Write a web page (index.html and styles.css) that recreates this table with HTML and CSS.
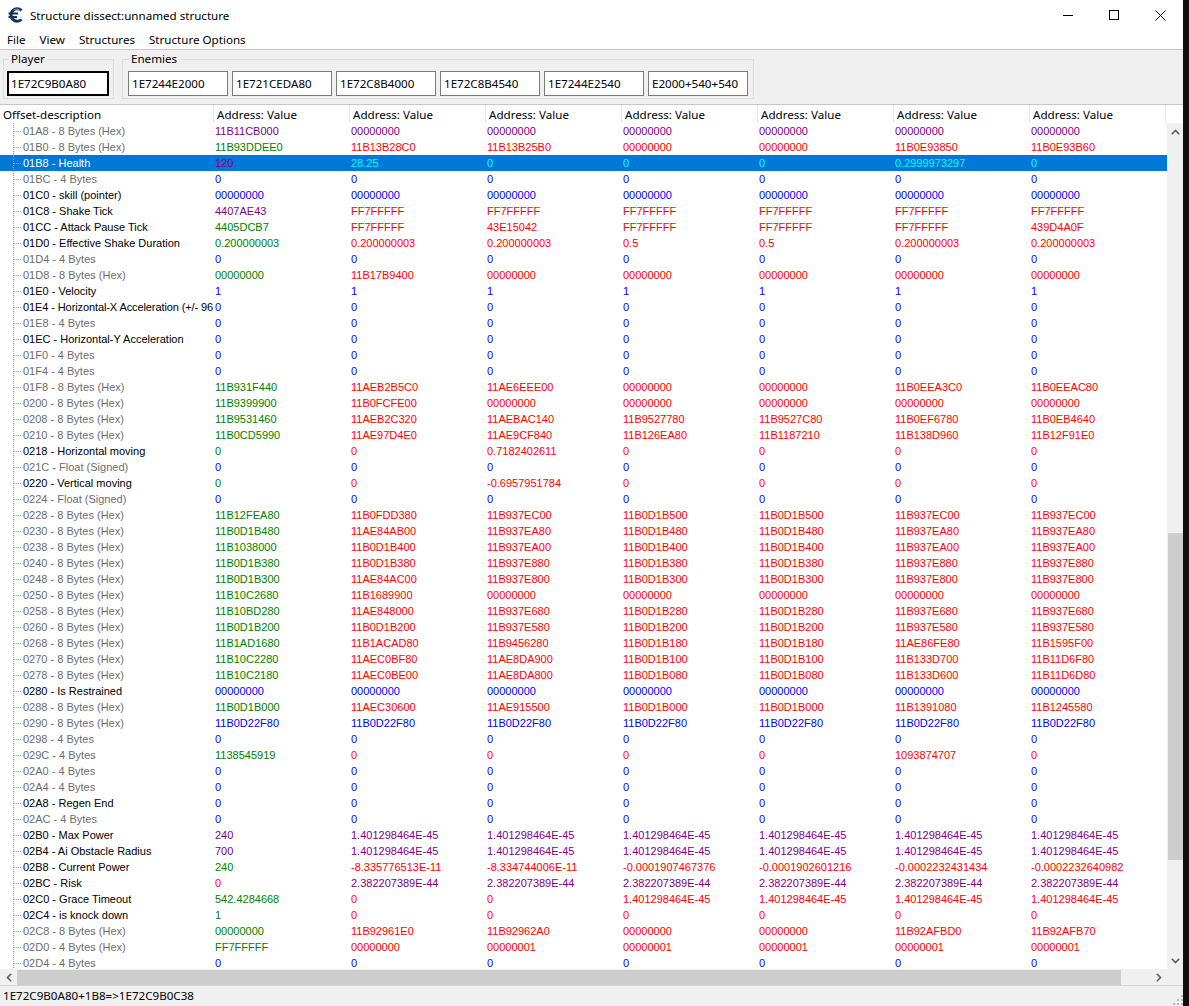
FILE: index.html
```html
<!DOCTYPE html>
<html>
<head>
<meta charset="utf-8">
<title>Structure dissect:unnamed structure</title>
<link rel="stylesheet" href="styles.css">
</head>
<body>
<div class="window">
  <div class="titlebar">
    <svg class="app-icon" viewBox="0 0 16 16" width="16" height="16">
      <path d="M13.5 3.5 A6.2 6.2 0 1 0 13.5 12.5" fill="none" stroke="#17325e" stroke-width="3"/>
      <path d="M0.5 6.5 H10" stroke="#17325e" stroke-width="2"/>
      <path d="M0.5 10 H9" stroke="#17325e" stroke-width="2"/>
      <path d="M12.6 4.3 A5 5 0 0 0 6 3" fill="none" stroke="#7aa6dc" stroke-width="1"/>
    </svg>
    <div class="title">Structure dissect:unnamed structure</div>
    <div class="wc"><svg width="10" height="10" viewBox="0 0 10 10"><path d="M0 5.5 H10" stroke="#000" stroke-width="1"/></svg></div>
    <div class="wc"><svg width="10" height="10" viewBox="0 0 10 10"><rect x="0.5" y="0.5" width="9" height="9" fill="none" stroke="#000" stroke-width="1"/></svg></div>
    <div class="wc"><svg width="11" height="11" viewBox="0 0 11 11"><path d="M0.5 0.5 L10.5 10.5 M10.5 0.5 L0.5 10.5" stroke="#000" stroke-width="1"/></svg></div>
  </div>
  <div class="menubar">
    <span class="menu-item">File</span>
    <span class="menu-item">View</span>
    <span class="menu-item">Structures</span>
    <span class="menu-item">Structure Options</span>
  </div>
  <div class="panel">
    <fieldset class="group group-player">
      <legend>Player</legend>
      <div class="edit edit-focus">1E72C9B0A80</div>
    </fieldset>
    <fieldset class="group group-enemies">
      <legend>Enemies</legend>
      <div class="edits">
        <div class="edit">1E7244E2000</div>
        <div class="edit">1E721CEDA80</div>
        <div class="edit">1E72C8B4000</div>
        <div class="edit">1E72C8B4540</div>
        <div class="edit">1E7244E2540</div>
        <div class="edit">E2000+540+540</div>
      </div>
    </fieldset>
  </div>
  <div class="header">
    <div class="hcell">Offset-description</div>
    <div class="hcell">Address: Value</div>
    <div class="hcell">Address: Value</div>
    <div class="hcell">Address: Value</div>
    <div class="hcell">Address: Value</div>
    <div class="hcell">Address: Value</div>
    <div class="hcell">Address: Value</div>
    <div class="hcell">Address: Value</div>
    <div class="hfill"></div>
  </div>
  <div class="tree">
    <div class="rows">
      <div class="row all-p"><span class="d dg">01A8 - 8 Bytes (Hex)</span><span class="v">11B11CB000</span><span class="v">00000000</span><span class="v">00000000</span><span class="v">00000000</span><span class="v">00000000</span><span class="v">00000000</span><span class="v">00000000</span></div>
      <div class="row gr"><span class="d dg">01B0 - 8 Bytes (Hex)</span><span class="v">11B93DDEE0</span><span class="v">11B13B28C0</span><span class="v">11B13B25B0</span><span class="v">00000000</span><span class="v">00000000</span><span class="v">11B0E93850</span><span class="v">11B0E93B60</span></div>
      <div class="row sel"><span class="d">01B8 - Health</span><span class="v">120</span><span class="v">28.25</span><span class="v">0</span><span class="v">0</span><span class="v">0</span><span class="v">0.2999973297</span><span class="v">0</span></div>
      <div class="row all-b"><span class="d dg">01BC - 4 Bytes</span><span class="v">0</span><span class="v">0</span><span class="v">0</span><span class="v">0</span><span class="v">0</span><span class="v">0</span><span class="v">0</span></div>
      <div class="row all-b"><span class="d">01C0 - skill (pointer)</span><span class="v">00000000</span><span class="v">00000000</span><span class="v">00000000</span><span class="v">00000000</span><span class="v">00000000</span><span class="v">00000000</span><span class="v">00000000</span></div>
      <div class="row pr"><span class="d">01C8 - Shake Tick</span><span class="v">4407AE43</span><span class="v">FF7FFFFF</span><span class="v">FF7FFFFF</span><span class="v">FF7FFFFF</span><span class="v">FF7FFFFF</span><span class="v">FF7FFFFF</span><span class="v">FF7FFFFF</span></div>
      <div class="row gr"><span class="d">01CC - Attack Pause Tick</span><span class="v">4405DCB7</span><span class="v">FF7FFFFF</span><span class="v">43E15042</span><span class="v">FF7FFFFF</span><span class="v">FF7FFFFF</span><span class="v">FF7FFFFF</span><span class="v">439D4A0F</span></div>
      <div class="row gr"><span class="d">01D0 - Effective Shake Duration</span><span class="v">0.200000003</span><span class="v">0.200000003</span><span class="v">0.200000003</span><span class="v">0.5</span><span class="v">0.5</span><span class="v">0.200000003</span><span class="v">0.200000003</span></div>
      <div class="row all-b"><span class="d dg">01D4 - 4 Bytes</span><span class="v">0</span><span class="v">0</span><span class="v">0</span><span class="v">0</span><span class="v">0</span><span class="v">0</span><span class="v">0</span></div>
      <div class="row gr"><span class="d dg">01D8 - 8 Bytes (Hex)</span><span class="v">00000000</span><span class="v">11B17B9400</span><span class="v">00000000</span><span class="v">00000000</span><span class="v">00000000</span><span class="v">00000000</span><span class="v">00000000</span></div>
      <div class="row all-b"><span class="d">01E0 - Velocity</span><span class="v">1</span><span class="v">1</span><span class="v">1</span><span class="v">1</span><span class="v">1</span><span class="v">1</span><span class="v">1</span></div>
      <div class="row all-b"><span class="d d-tight">01E4 - Horizontal-X Acceleration (+/- 96</span><span class="v">0</span><span class="v">0</span><span class="v">0</span><span class="v">0</span><span class="v">0</span><span class="v">0</span><span class="v">0</span></div>
      <div class="row all-b"><span class="d dg">01E8 - 4 Bytes</span><span class="v">0</span><span class="v">0</span><span class="v">0</span><span class="v">0</span><span class="v">0</span><span class="v">0</span><span class="v">0</span></div>
      <div class="row all-b"><span class="d">01EC - Horizontal-Y Acceleration</span><span class="v">0</span><span class="v">0</span><span class="v">0</span><span class="v">0</span><span class="v">0</span><span class="v">0</span><span class="v">0</span></div>
      <div class="row all-b"><span class="d dg">01F0 - 4 Bytes</span><span class="v">0</span><span class="v">0</span><span class="v">0</span><span class="v">0</span><span class="v">0</span><span class="v">0</span><span class="v">0</span></div>
      <div class="row all-b"><span class="d dg">01F4 - 4 Bytes</span><span class="v">0</span><span class="v">0</span><span class="v">0</span><span class="v">0</span><span class="v">0</span><span class="v">0</span><span class="v">0</span></div>
      <div class="row gr"><span class="d dg">01F8 - 8 Bytes (Hex)</span><span class="v">11B931F440</span><span class="v">11AEB2B5C0</span><span class="v">11AE6EEE00</span><span class="v">00000000</span><span class="v">00000000</span><span class="v">11B0EEA3C0</span><span class="v">11B0EEAC80</span></div>
      <div class="row gr"><span class="d dg">0200 - 8 Bytes (Hex)</span><span class="v">11B9399900</span><span class="v">11B0FCFE00</span><span class="v">00000000</span><span class="v">00000000</span><span class="v">00000000</span><span class="v">00000000</span><span class="v">00000000</span></div>
      <div class="row gr"><span class="d dg">0208 - 8 Bytes (Hex)</span><span class="v">11B9531460</span><span class="v">11AEB2C320</span><span class="v">11AEBAC140</span><span class="v">11B9527780</span><span class="v">11B9527C80</span><span class="v">11B0EF6780</span><span class="v">11B0EB4640</span></div>
      <div class="row gr"><span class="d dg">0210 - 8 Bytes (Hex)</span><span class="v">11B0CD5990</span><span class="v">11AE97D4E0</span><span class="v">11AE9CF840</span><span class="v">11B126EA80</span><span class="v">11B1187210</span><span class="v">11B138D960</span><span class="v">11B12F91E0</span></div>
      <div class="row gr"><span class="d">0218 - Horizontal moving</span><span class="v">0</span><span class="v">0</span><span class="v">0.7182402611</span><span class="v">0</span><span class="v">0</span><span class="v">0</span><span class="v">0</span></div>
      <div class="row all-b"><span class="d dg">021C - Float (Signed)</span><span class="v">0</span><span class="v">0</span><span class="v">0</span><span class="v">0</span><span class="v">0</span><span class="v">0</span><span class="v">0</span></div>
      <div class="row gr"><span class="d">0220 - Vertical moving</span><span class="v">0</span><span class="v">0</span><span class="v">-0.6957951784</span><span class="v">0</span><span class="v">0</span><span class="v">0</span><span class="v">0</span></div>
      <div class="row all-b"><span class="d dg">0224 - Float (Signed)</span><span class="v">0</span><span class="v">0</span><span class="v">0</span><span class="v">0</span><span class="v">0</span><span class="v">0</span><span class="v">0</span></div>
      <div class="row gr"><span class="d dg">0228 - 8 Bytes (Hex)</span><span class="v">11B12FEA80</span><span class="v">11B0FDD380</span><span class="v">11B937EC00</span><span class="v">11B0D1B500</span><span class="v">11B0D1B500</span><span class="v">11B937EC00</span><span class="v">11B937EC00</span></div>
      <div class="row gr"><span class="d dg">0230 - 8 Bytes (Hex)</span><span class="v">11B0D1B480</span><span class="v">11AE84AB00</span><span class="v">11B937EA80</span><span class="v">11B0D1B480</span><span class="v">11B0D1B480</span><span class="v">11B937EA80</span><span class="v">11B937EA80</span></div>
      <div class="row gr"><span class="d dg">0238 - 8 Bytes (Hex)</span><span class="v">11B1038000</span><span class="v">11B0D1B400</span><span class="v">11B937EA00</span><span class="v">11B0D1B400</span><span class="v">11B0D1B400</span><span class="v">11B937EA00</span><span class="v">11B937EA00</span></div>
      <div class="row gr"><span class="d dg">0240 - 8 Bytes (Hex)</span><span class="v">11B0D1B380</span><span class="v">11B0D1B380</span><span class="v">11B937E880</span><span class="v">11B0D1B380</span><span class="v">11B0D1B380</span><span class="v">11B937E880</span><span class="v">11B937E880</span></div>
      <div class="row gr"><span class="d dg">0248 - 8 Bytes (Hex)</span><span class="v">11B0D1B300</span><span class="v">11AE84AC00</span><span class="v">11B937E800</span><span class="v">11B0D1B300</span><span class="v">11B0D1B300</span><span class="v">11B937E800</span><span class="v">11B937E800</span></div>
      <div class="row gr"><span class="d dg">0250 - 8 Bytes (Hex)</span><span class="v">11B10C2680</span><span class="v">11B1689900</span><span class="v">00000000</span><span class="v">00000000</span><span class="v">00000000</span><span class="v">00000000</span><span class="v">00000000</span></div>
      <div class="row gr"><span class="d dg">0258 - 8 Bytes (Hex)</span><span class="v">11B10BD280</span><span class="v">11AE848000</span><span class="v">11B937E680</span><span class="v">11B0D1B280</span><span class="v">11B0D1B280</span><span class="v">11B937E680</span><span class="v">11B937E680</span></div>
      <div class="row gr"><span class="d dg">0260 - 8 Bytes (Hex)</span><span class="v">11B0D1B200</span><span class="v">11B0D1B200</span><span class="v">11B937E580</span><span class="v">11B0D1B200</span><span class="v">11B0D1B200</span><span class="v">11B937E580</span><span class="v">11B937E580</span></div>
      <div class="row gr"><span class="d dg">0268 - 8 Bytes (Hex)</span><span class="v">11B1AD1680</span><span class="v">11B1ACAD80</span><span class="v">11B9456280</span><span class="v">11B0D1B180</span><span class="v">11B0D1B180</span><span class="v">11AE86FE80</span><span class="v">11B1595F00</span></div>
      <div class="row gr"><span class="d dg">0270 - 8 Bytes (Hex)</span><span class="v">11B10C2280</span><span class="v">11AEC0BF80</span><span class="v">11AE8DA900</span><span class="v">11B0D1B100</span><span class="v">11B0D1B100</span><span class="v">11B133D700</span><span class="v">11B11D6F80</span></div>
      <div class="row gr"><span class="d dg">0278 - 8 Bytes (Hex)</span><span class="v">11B10C2180</span><span class="v">11AEC0BE00</span><span class="v">11AE8DA800</span><span class="v">11B0D1B080</span><span class="v">11B0D1B080</span><span class="v">11B133D600</span><span class="v">11B11D6D80</span></div>
      <div class="row all-b"><span class="d">0280 - Is Restrained</span><span class="v">00000000</span><span class="v">00000000</span><span class="v">00000000</span><span class="v">00000000</span><span class="v">00000000</span><span class="v">00000000</span><span class="v">00000000</span></div>
      <div class="row gr"><span class="d dg">0288 - 8 Bytes (Hex)</span><span class="v">11B0D1B000</span><span class="v">11AEC30600</span><span class="v">11AE915500</span><span class="v">11B0D1B000</span><span class="v">11B0D1B000</span><span class="v">11B1391080</span><span class="v">11B1245580</span></div>
      <div class="row all-b"><span class="d dg">0290 - 8 Bytes (Hex)</span><span class="v">11B0D22F80</span><span class="v">11B0D22F80</span><span class="v">11B0D22F80</span><span class="v">11B0D22F80</span><span class="v">11B0D22F80</span><span class="v">11B0D22F80</span><span class="v">11B0D22F80</span></div>
      <div class="row all-b"><span class="d dg">0298 - 4 Bytes</span><span class="v">0</span><span class="v">0</span><span class="v">0</span><span class="v">0</span><span class="v">0</span><span class="v">0</span><span class="v">0</span></div>
      <div class="row gr"><span class="d dg">029C - 4 Bytes</span><span class="v">1138545919</span><span class="v">0</span><span class="v">0</span><span class="v">0</span><span class="v">0</span><span class="v">1093874707</span><span class="v">0</span></div>
      <div class="row all-b"><span class="d dg">02A0 - 4 Bytes</span><span class="v">0</span><span class="v">0</span><span class="v">0</span><span class="v">0</span><span class="v">0</span><span class="v">0</span><span class="v">0</span></div>
      <div class="row all-b"><span class="d dg">02A4 - 4 Bytes</span><span class="v">0</span><span class="v">0</span><span class="v">0</span><span class="v">0</span><span class="v">0</span><span class="v">0</span><span class="v">0</span></div>
      <div class="row all-b"><span class="d">02A8 - Regen End</span><span class="v">0</span><span class="v">0</span><span class="v">0</span><span class="v">0</span><span class="v">0</span><span class="v">0</span><span class="v">0</span></div>
      <div class="row all-b"><span class="d dg">02AC - 4 Bytes</span><span class="v">0</span><span class="v">0</span><span class="v">0</span><span class="v">0</span><span class="v">0</span><span class="v">0</span><span class="v">0</span></div>
      <div class="row all-p"><span class="d">02B0 - Max Power</span><span class="v">240</span><span class="v">1.401298464E-45</span><span class="v">1.401298464E-45</span><span class="v">1.401298464E-45</span><span class="v">1.401298464E-45</span><span class="v">1.401298464E-45</span><span class="v">1.401298464E-45</span></div>
      <div class="row all-p"><span class="d">02B4 - Ai Obstacle Radius</span><span class="v">700</span><span class="v">1.401298464E-45</span><span class="v">1.401298464E-45</span><span class="v">1.401298464E-45</span><span class="v">1.401298464E-45</span><span class="v">1.401298464E-45</span><span class="v">1.401298464E-45</span></div>
      <div class="row gr"><span class="d">02B8 - Current Power</span><span class="v">240</span><span class="v">-8.335776513E-11</span><span class="v">-8.334744006E-11</span><span class="v">-0.0001907467376</span><span class="v">-0.0001902601216</span><span class="v">-0.0002232431434</span><span class="v">-0.0002232640982</span></div>
      <div class="row rp"><span class="d">02BC - Risk</span><span class="v">0</span><span class="v">2.382207389E-44</span><span class="v">2.382207389E-44</span><span class="v">2.382207389E-44</span><span class="v">2.382207389E-44</span><span class="v">2.382207389E-44</span><span class="v">2.382207389E-44</span></div>
      <div class="row gr"><span class="d">02C0 - Grace Timeout</span><span class="v">542.4284668</span><span class="v">0</span><span class="v">0</span><span class="v">1.401298464E-45</span><span class="v">1.401298464E-45</span><span class="v">1.401298464E-45</span><span class="v">1.401298464E-45</span></div>
      <div class="row gr"><span class="d">02C4 - is knock down</span><span class="v">1</span><span class="v">0</span><span class="v">0</span><span class="v">0</span><span class="v">0</span><span class="v">0</span><span class="v">0</span></div>
      <div class="row gr"><span class="d dg">02C8 - 8 Bytes (Hex)</span><span class="v">00000000</span><span class="v">11B92961E0</span><span class="v">11B92962A0</span><span class="v">00000000</span><span class="v">00000000</span><span class="v">11B92AFBD0</span><span class="v">11B92AFB70</span></div>
      <div class="row gr"><span class="d dg">02D0 - 4 Bytes (Hex)</span><span class="v">FF7FFFFF</span><span class="v">00000000</span><span class="v">00000001</span><span class="v">00000001</span><span class="v">00000001</span><span class="v">00000001</span><span class="v">00000001</span></div>
      <div class="row all-b"><span class="d dg">02D4 - 4 Bytes</span><span class="v">0</span><span class="v">0</span><span class="v">0</span><span class="v">0</span><span class="v">0</span><span class="v">0</span><span class="v">0</span></div>
    </div>
    <div class="vscroll">
      <div class="sb-btn"><svg width="9" height="6" viewBox="0 0 9 6"><path d="M0.8 5.2 L4.5 1.5 L8.2 5.2" fill="none" stroke="#606060" stroke-width="1.6"/></svg></div>
      <div class="vtrack"><div class="vthumb"></div></div>
      <div class="sb-btn"><svg width="9" height="6" viewBox="0 0 9 6"><path d="M0.8 0.8 L4.5 4.5 L8.2 0.8" fill="none" stroke="#606060" stroke-width="1.6"/></svg></div>
    </div>
  </div>
  <div class="hscroll">
    <div class="sb-btn hbtn"><svg width="6" height="9" viewBox="0 0 6 9"><path d="M5.2 0.8 L1.5 4.5 L5.2 8.2" fill="none" stroke="#606060" stroke-width="1.6"/></svg></div>
    <div class="hthumb"></div>
    <div class="htrack"></div>
    <div class="sb-btn hbtn"><svg width="6" height="9" viewBox="0 0 6 9"><path d="M0.8 0.8 L4.5 4.5 L0.8 8.2" fill="none" stroke="#606060" stroke-width="1.6"/></svg></div>
    <div class="corner"></div>
  </div>
  <div class="statusbar">
    <span class="status-text">1E72C9B0A80+1B8=&gt;1E72C9B0C38</span>
    <svg class="grip" width="10" height="10" viewBox="0 0 10 10">
      <rect x="8" y="0" width="2" height="2" fill="#b8b8b8"/>
      <rect x="4" y="4" width="2" height="2" fill="#b8b8b8"/>
      <rect x="8" y="4" width="2" height="2" fill="#b8b8b8"/>
      <rect x="0" y="8" width="2" height="2" fill="#b8b8b8"/>
      <rect x="4" y="8" width="2" height="2" fill="#b8b8b8"/>
      <rect x="8" y="8" width="2" height="2" fill="#b8b8b8"/>
    </svg>
  </div>
</div>
<div class="strip"></div>
</body>
</html>
```
FILE: styles.css
```css
* { box-sizing: border-box; }
html, body { margin: 0; padding: 0; }
body {
  width: 1189px;
  height: 1006px;
  overflow: hidden;
  display: flex;
  background: #0c0c0c;
  font-family: "Noto Sans", "Liberation Sans", sans-serif;
  color: #000;
}
.window {
  width: 1183px;
  height: 1006px;
  display: flex;
  flex-direction: column;
  background: #f0f0f0;
  flex: none;
}
.strip { flex: 1; background: #101010; }

/* title bar */
.titlebar {
  height: 30px;
  background: #fff;
  display: flex;
  align-items: center;
  flex: none;
}
.app-icon { margin-left: 8px; margin-right: 6px; margin-top: -1px; }
.title { flex: 1; font-size: 11.6px; }
.wc {
  width: 46px;
  height: 30px;
  display: flex;
  align-items: center;
  justify-content: center;
}

/* menu */
.menubar {
  height: 19px;
  background: #fff;
  display: flex;
  align-items: center;
  font-size: 11.6px;
  flex: none;
  padding-bottom: 1px;
}
.menu-item { padding: 0 7px; }

/* top panel */
.panel {
  height: 56px;
  flex: none;
  border-top: 1px solid #c6c6c6;
  border-bottom: 1px solid #c6c6c6;
  background: #f0f0f0;
  display: flex;
  align-items: flex-start;
  padding: 1px 0 0 3px;
  gap: 8px;
}
.group {
  margin: 0;
  border: 1px solid #dcdcdc;
  padding: 4px 3px 2px 3px;
  font-size: 11.6px;
}
.group legend {
  margin-left: 2px;
  padding: 0 2px;
  line-height: 16px;
}
.group-player { width: 111px; }
.group-enemies { width: 632px; padding-left: 5px; }
.group-enemies legend { margin-left: 1px; }
.edits { display: flex; gap: 4px; }
.edit {
  width: 100px;
  height: 25px;
  background: #fff;
  border: 1px solid #7a7a7a;
  font-size: 11.6px;
  line-height: 23px;
  padding-left: 3px;
  white-space: nowrap;
  overflow: hidden;
}
.edit-focus {
  width: 102px;
  border: 2px solid #000;
  line-height: 21px;
  padding-left: 2px;
}

/* header */
.header {
  height: 18px;
  flex: none;
  background: #fff;
  display: grid;
  grid-template-columns: 214px repeat(7, 136px) 1fr;
  font-size: 11.6px;
  line-height: 18px;
}
.hcell {
  padding-left: 3px;
  padding-top: 1px;
  border-right: 1px solid #e5e5e5;
  white-space: nowrap;
  overflow: hidden;
}

/* tree */
.tree {
  height: 846px;
  flex: none;
  display: flex;
  background: #fff;
}
.rows {
  width: 1167px;
  overflow: hidden;
  font-family: "Liberation Sans", Arial, sans-serif;
  font-size: 11px;
}
.row {
  display: grid;
  grid-template-columns: 214px repeat(7, 136px) 1fr;
  height: 16px;
  line-height: 15px;
  padding-top: 1px;
  white-space: nowrap;
}
.d {
  padding-left: 23px;
  overflow: hidden;
  color: #000;
  margin-top: -1px;
  padding-top: 1px;
  background-image:
    repeating-linear-gradient(to bottom, #a0a0a0 0 1px, transparent 1px 2px),
    repeating-linear-gradient(to right, #a0a0a0 0 1px, transparent 1px 2px);
  background-size: 1px 16px, 8px 1px;
  background-position: 13px 0, 14px 8px;
  background-repeat: no-repeat;
}
.d-tight { letter-spacing: -0.1px; }
.dg { color: #6d6d6d; }
.v { padding-left: 1px; overflow: hidden; }

.all-p .v { color: #800080; }
.all-b .v { color: #0000ff; }
.gr .v { color: #ff0000; }
.gr .v:nth-child(2) { color: #008000; }
.pr .v { color: #ff0000; }
.pr .v:nth-child(2) { color: #800080; }
.rp .v { color: #800080; }
.rp .v:nth-child(2) { color: #ff0000; }
.sel { background: #0078d7; }
.sel .d { color: #fff; }
.sel .v { color: #00ffff; }
.sel .v:nth-child(2) { color: #800080; }

/* scrollbars */
.vscroll {
  width: 16px;
  display: flex;
  flex-direction: column;
  background: #f0f0f0;
}
.sb-btn {
  height: 17px;
  display: flex;
  align-items: center;
  justify-content: center;
  flex: none;
}
.vtrack { flex: 1; padding-left: 1px; }
.vthumb {
  margin-top: 393px;
  width: 15px;
  height: 327px;
  background: #cdcdcd;
}
.hscroll {
  height: 16px;
  flex: none;
  display: flex;
  background: #f0f0f0;
}
.hbtn { width: 17px; height: 16px; }
.hthumb { width: 1104px; height: 15px; margin-top: 1px; background: #cdcdcd; }
.htrack { flex: 1; }
.corner { width: 16px; }

/* status */
.statusbar {
  height: 21px;
  flex: none;
  border-top: 1px solid #d7d7d7;
  display: flex;
  justify-content: space-between;
  align-items: flex-end;
  font-size: 11.6px;
}
.status-text { padding-left: 3px; line-height: 20px; }
.grip { margin: 0 0 1px 0; }
```
